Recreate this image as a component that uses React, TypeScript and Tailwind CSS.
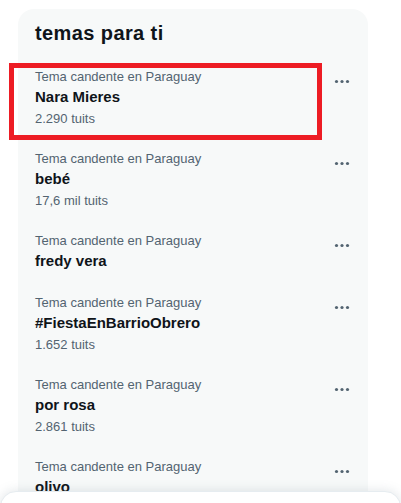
import React from 'react';

type Trend = {
  name: string;
  count?: string;
};

const trends: Trend[] = [
  { name: 'Nara Mieres', count: '2.290 tuits' },
  { name: 'bebé', count: '17,6 mil tuits' },
  { name: 'fredy vera' },
  { name: '#FiestaEnBarrioObrero', count: '1.652 tuits' },
  { name: 'por rosa', count: '2.861 tuits' },
  { name: 'olivo', count: '1.204 tuits' },
];

function MoreIcon() {
  return (
    <svg width="19" height="19" viewBox="0 0 19 19" className="mt-[2.5px] shrink-0" fill="#536471">
      <circle cx="3.5" cy="9.5" r="1.6" />
      <circle cx="9" cy="9.5" r="1.6" />
      <circle cx="14.5" cy="9.5" r="1.6" />
    </svg>
  );
}

function TrendRow({ trend }: { trend: Trend }) {
  return (
    <div className="flex justify-between py-3 pl-[17px] pr-4">
      <div className="flex flex-col">
        <span className="text-[13px] leading-4 text-[#536471]">Tema candente en Paraguay</span>
        <span className="pt-[2px] text-[15px] leading-5 font-bold text-[#0f1419]">{trend.name}</span>
        {trend.count && (
          <span className="pt-1 text-[13px] leading-4 text-[#536471]">{trend.count}</span>
        )}
      </div>
      <MoreIcon />
    </div>
  );
}

export default function App() {
  return (
    <div
      className="relative h-[503px] w-[401px] overflow-hidden bg-white"
      style={{ fontFamily: '"Liberation Sans", Arial, sans-serif' }}
    >
      <div className="pl-[18px] pt-[9px]">
        <div className="relative w-[350px] rounded-2xl bg-[#f7f9f9]">
          <h2 className="py-3 pl-[17px] pr-4 text-xl leading-6 font-extrabold tracking-[0.4px] text-[#0f1419]">
            temas para ti
          </h2>
          {trends.map((t) => (
            <TrendRow key={t.name} trend={t} />
          ))}

          {/* highlight box around the first trend */}
          <div className="pointer-events-none absolute left-[-9px] top-[54px] h-[77px] w-[313px] border-[5px] border-[#ed1c24]" />
        </div>
      </div>

      {/* messages drawer peeking from the bottom */}
      <div className="absolute bottom-[-40px] left-0 right-0 h-[52px] rounded-t-2xl border border-[#e6ecf0] bg-white shadow-[0_0_12px_rgba(101,119,134,0.2)]" />
    </div>
  );
}
